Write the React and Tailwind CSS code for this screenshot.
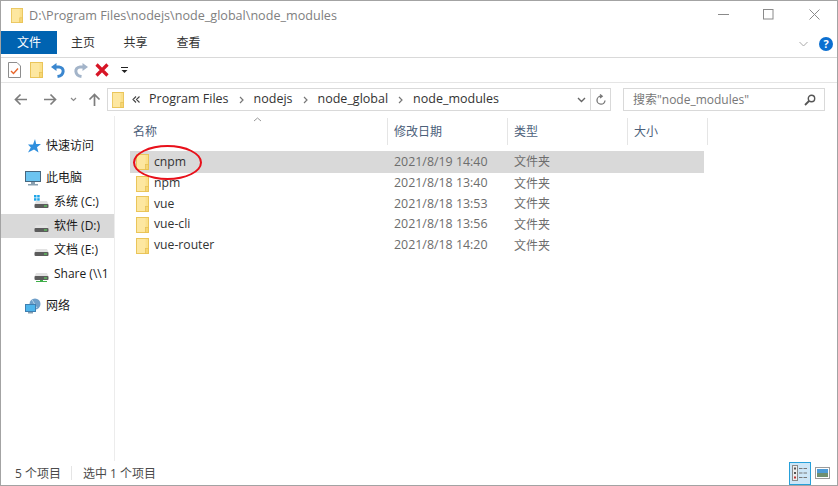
import React from "react";

const font = { fontFamily: '"Open Sans","Noto Sans CJK SC",sans-serif' };

function Folder({ w = 13, h = 16, className = "" }) {
  return (
    <svg width={w} height={h} viewBox="0 0 13 16" preserveAspectRatio="none" className={className}>
      <rect x="0.5" y="0.5" width="12" height="15" fill="#fbe08a" stroke="#eac55a" />
      <rect x="1" y="1" width="8.5" height="14" fill="#fde7a0" />
      <rect x="9.5" y="10.5" width="3" height="5" fill="#f7d774" stroke="#e6bf52" strokeWidth="0.7" />
    </svg>
  );
}

function Drive({ net = false, win = false }) {
  return (
    <svg width="15" height="15" viewBox="0 0 15 15" className="ml-px">
      {win && (
        <g fill="#1ea5e8">
          <rect x="0" y="0" width="2.5" height="2.5" />
          <rect x="3.2" y="0" width="2.5" height="2.5" />
          <rect x="0" y="3.2" width="2.5" height="2.5" />
          <rect x="3.2" y="3.2" width="2.5" height="2.5" />
        </g>
      )}
      <path d="M2 6 L13 6 L14.5 9.5 L0.5 9.5 Z" fill="#e2e2e2" />
      <rect x="0.5" y="9" width="14" height="4" rx="1" fill="#5c5c5c" />
      <rect x="10" y="10.4" width="3" height="1.2" fill="#5fd35f" />
      {net && <path d="M6 13 H9 V14 H13 V15 H2 V14 H6 Z" fill="#3fae49" />}
    </svg>
  );
}

function SideItem({ icon, label, selected, indent }) {
  return (
    <div className={`h-6 flex items-center pr-[3px] ${selected ? "bg-[#d9d9d9]" : ""} ${indent ? "pl-[32px]" : "pl-[24px]"}`}>
      <span className="w-[21px] shrink-0 flex items-center">{icon}</span>
      <span className="whitespace-nowrap overflow-hidden text-[12px] text-[#1a1a1a]">{label}</span>
    </div>
  );
}

function Row({ name, date, height }) {
  return (
    <div className={`${height} flex items-center text-[12px]`}>
      <span className="w-[6px]" />
      <Folder />
      <span className="ml-[5px] w-[240px] text-[#333] text-[12.2px]">{name}</span>
      <span className="w-[120px] text-[#6d6d6d] text-[12.4px] whitespace-nowrap">{date}</span>
      <span className="text-[#6d6d6d]">文件夹</span>
    </div>
  );
}

function HeaderCell({ label, w, pl = "pl-[6px]" }) {
  return (
    <div className={`${w} h-[27px] flex items-center ${pl} border-r border-[#e5e5e5] text-[12px] text-[#4c607a]`}>
      {label}
    </div>
  );
}

function Sep() {
  return (
    <svg width="5" height="8" viewBox="0 0 5 8" className="mx-[10px]">
      <path d="M1 1L4 4L1 7" stroke="#777" strokeWidth="1.2" fill="none" />
    </svg>
  );
}

export default function App() {
  return (
    <div style={font} className="relative w-[838px] h-[486px] bg-white border border-[#a3a3a3] flex flex-col overflow-hidden">
      {/* title bar */}
      <div className="h-[30px] flex items-center shrink-0">
        <Folder className="ml-[10px] -mt-[2px]" w={12} h={15} />
        <span className="ml-[6px] text-[12.6px] text-[#808080]">D:\Program Files\nodejs\node_global\node_modules</span>
        <div className="ml-auto flex items-center -mt-[3px]">
          <svg width="11" height="11" viewBox="0 0 11 11" className="mr-[34px]"><path d="M0 5.5H11" stroke="#8a8a8a" /></svg>
          <svg width="11" height="11" viewBox="0 0 11 11" className="mr-[35px]"><rect x="0.5" y="0.5" width="9.5" height="9.5" fill="none" stroke="#8a8a8a" /></svg>
          <svg width="11" height="11" viewBox="0 0 11 11" className="mr-[17px]"><path d="M0.5 0.5L10.5 10.5M10.5 0.5L0.5 10.5" stroke="#8a8a8a" /></svg>
        </div>
      </div>
      {/* ribbon tabs */}
      <div className="h-[27px] flex items-start shrink-0 border-b border-[#d9d9d9] text-[12px] text-[#333]">
        <div className="w-[56px] h-[23px] bg-[#0063b1] text-white flex items-center justify-center">文件</div>
        <div className="w-[52px] h-[23px] flex items-center justify-center">主页</div>
        <div className="w-[53px] h-[23px] flex items-center justify-center">共享</div>
        <div className="w-[53px] h-[23px] flex items-center justify-center">查看</div>
        <div className="ml-auto h-[25px] flex items-center gap-[11px] pr-[4px]">
          <svg width="9" height="6" viewBox="0 0 9 6"><path d="M0.5 1L4.5 5L8.5 1" stroke="#a8a8a8" fill="none" /></svg>
          <span className="w-[14px] h-[14px] rounded-full bg-[#0b6fd0] text-white text-[11px] font-bold flex items-center justify-center leading-none">?</span>
        </div>
      </div>
      {/* quick access */}
      <div className="h-[25px] flex items-center shrink-0 border-b border-[#e5e5e5] pl-[7px]">
        <svg width="13" height="16" viewBox="0 0 13 16">
          <path d="M.5 .5H9L12.5 4V15.5H.5Z" fill="#fff" stroke="#8d8d8d" />
          <path d="M3 9L5.5 11.5L10 6.5" stroke="#e8662b" strokeWidth="1.4" fill="none" />
        </svg>
        <Folder className="ml-[9px]" />
        <svg width="14" height="15" viewBox="0 0 14 15" className="ml-[8px]">
          <path d="M5.5 0V8L0 4Z" fill="#3b87cf" />
          <path d="M4 4H8C14 4.5 13.5 12.5 6.5 13.5" fill="none" stroke="#3b87cf" strokeWidth="3" />
        </svg>
        <svg width="14" height="15" viewBox="0 0 14 15" className="ml-[9px]">
          <path d="M8.5 0V8L14 4Z" fill="#a3b4c9" />
          <path d="M10 4H6C0 4.5 .5 12.5 7.5 13.5" fill="none" stroke="#a3b4c9" strokeWidth="3" />
        </svg>
        <svg width="14" height="14" viewBox="0 0 14 14" className="ml-[7px]">
          <path d="M1.5 1.5L12.5 12.5M12.5 1.5L1.5 12.5" stroke="#d71526" strokeWidth="3.2" />
        </svg>
        <svg width="7" height="7" viewBox="0 0 7 7" className="ml-[12px]">
          <path d="M0 .5H7" stroke="#222" /><path d="M.5 3H6.5L3.5 6Z" fill="#222" />
        </svg>
      </div>
      {/* nav bar */}
      <div className="h-[33px] flex items-center shrink-0">
        <svg width="13" height="13" viewBox="0 0 13 13" className="ml-[13px]"><path d="M13 6.5H1.5M6.5 1.5L1.5 6.5L6.5 11.5" stroke="#7d7d7d" strokeWidth="1.7" fill="none" /></svg>
        <svg width="13" height="13" viewBox="0 0 13 13" className="ml-[17px]"><path d="M0 6.5H11.5M6.5 1.5L11.5 6.5L6.5 11.5" stroke="#7d7d7d" strokeWidth="1.7" fill="none" /></svg>
        <svg width="7" height="5" viewBox="0 0 7 5" className="ml-[13px]"><path d="M1 1L3.5 3.5L6 1" stroke="#8a8a8a" strokeWidth="1.2" fill="none" /></svg>
        <svg width="13" height="13" viewBox="0 0 13 13" className="ml-[11px]"><path d="M6.5 13V1.5M1.5 6.5L6.5 1.5L11.5 6.5" stroke="#7d7d7d" strokeWidth="1.7" fill="none" /></svg>
        <div className="ml-[6px] w-[504px] h-[23px] border border-[#d9d9d9] flex items-center text-[12.5px] text-[#333]">
          <Folder className="ml-[4px]" w={12} h={16} />
          <svg width="8" height="7" viewBox="0 0 8 7" className="ml-[8px]"><path d="M4 .5L1 3.5L4 6.5M7.5 .5L4.5 3.5L7.5 6.5" stroke="#444" strokeWidth="1.1" fill="none" /></svg>
          <span className="ml-[9px]">Program Files</span>
          <Sep />
          <span>nodejs</span>
          <Sep />
          <span>node_global</span>
          <Sep />
          <span>node_modules</span>
          <div className="ml-auto flex items-center h-full">
            <svg width="9" height="6" viewBox="0 0 9 6" className="mr-[4px]"><path d="M1 1L4.5 4.5L8 1" stroke="#666" strokeWidth="1.4" fill="none" /></svg>
            <div className="w-[20px] h-full border-l border-[#d9d9d9] flex items-center justify-center">
              <svg width="12" height="12" viewBox="0 0 12 12"><path d="M10 6.5A4 4 0 1 1 6 2.2M5 .5L7.2 2.2L5 4" stroke="#777" strokeWidth="1.3" fill="none" /></svg>
            </div>
          </div>
        </div>
        <div className="ml-[12px] w-[202px] h-[23px] border border-[#d9d9d9] flex items-center pl-[9px] pr-[8px] text-[12px] text-[#777]">
          <span>搜索"node_modules"</span>
          <svg width="12" height="12" viewBox="0 0 12 12" className="ml-auto"><circle cx="7.5" cy="4.5" r="3.2" stroke="#555" strokeWidth="1.4" fill="none" /><path d="M5 7L1 11" stroke="#555" strokeWidth="1.8" /></svg>
        </div>
      </div>
      {/* main */}
      <div className="flex-1 flex min-h-0">
        <div className="w-[114px] shrink-0 border-r border-[#ececec] pt-[18px]">
          <SideItem
            icon={<svg width="14" height="14" viewBox="0 0 14 14" className="ml-[2px]"><path d="M8 0L9.2 5H14L10 8.2L11.5 13.5L7 10.5L1 13.5L3.8 8.5L1 5.5H6Z" fill="#2f8fde" /></svg>}
            label="快速访问"
          />
          <div className="h-[8px]" />
          <SideItem
            icon={<svg width="16" height="15" viewBox="0 0 16 15"><rect x="0.5" y="0.5" width="15" height="10" fill="#6cc4f0" stroke="#47677f" /><rect x="6" y="11" width="4" height="2" fill="#8aa0b0" /><rect x="3" y="13" width="10" height="1.5" fill="#8aa0b0" /></svg>}
            label="此电脑"
          />
          <SideItem indent icon={<Drive win />} label="系统 (C:)" />
          <SideItem indent selected icon={<Drive />} label="软件 (D:)" />
          <SideItem indent icon={<Drive />} label="文档 (E:)" />
          <SideItem indent icon={<Drive net />} label="Share (\\1" />
          <div className="h-[8px]" />
          <SideItem
            icon={<svg width="16" height="16" viewBox="0 0 16 16"><circle cx="10" cy="6" r="5.5" fill="#6f9fc9" /><path d="M7 2C9 4 10 8 12 10" stroke="#b7d7ea" fill="none" /><rect x="0.5" y="6.5" width="10" height="7" fill="#4eb5ec" stroke="#3f7fb0" /><rect x="3" y="14" width="5" height="1.5" fill="#8aa0b0" /></svg>}
            label="网络"
          />
        </div>
        <div className="flex-1 min-w-0 relative">
          <div className="flex pt-[2px] pl-[13px] relative">
            <HeaderCell label="名称" w="w-[260px]" pl="pl-[5px]" />
            <HeaderCell label="修改日期" w="w-[120px]" />
            <HeaderCell label="类型" w="w-[120px]" />
            <HeaderCell label="大小" w="w-[80px]" />
            <svg width="9" height="5" viewBox="0 0 9 5" className="absolute left-[138px] top-px"><path d="M1 4L4.5 1L8 4" stroke="#999" fill="none" /></svg>
          </div>
          <div className="mt-[6px] ml-[15px] w-[574px]">
            <div className="bg-[#d9d9d9]"><Row name="cnpm" date="2021/8/19 14:40" height="h-[22px]" /></div>
            <Row name="npm" date="2021/8/18 13:40" height="h-[21px]" />
            <Row name="vue" date="2021/8/18 13:53" height="h-[20px]" />
            <Row name="vue-cli" date="2021/8/18 13:56" height="h-[21px]" />
            <Row name="vue-router" date="2021/8/18 14:20" height="h-[21px]" />
          </div>
          <div className="absolute left-[18px] top-[29px] w-[69px] h-[35px] rounded-[50%] border-2 border-[#e8101a]" />
        </div>
      </div>
      {/* status */}
      <div className="h-[24px] shrink-0 flex items-center text-[12px] text-[#4a4a4a]">
        <span className="ml-[14px] pt-px">5 个项目</span>
        <span className="ml-[10px] h-[14px] border-l border-[#e5e5e5]" />
        <span className="ml-[11px] pt-px">选中 1 个项目</span>
        <div className="ml-auto flex items-center pr-[7px] gap-[4px]">
          <div className="w-[22px] h-[23px] bg-[#cde6f7] border border-[#26a0da] flex items-center justify-center">
            <svg width="16" height="16" viewBox="0 0 16 16">
              <rect x="0.5" y="0.5" width="5" height="15" fill="#eee" stroke="#8a8a8a" />
              <rect x="2" y="2.5" width="2" height="2" fill="#555" />
              <rect x="2" y="7" width="2" height="2" fill="#555" />
              <rect x="2" y="11.5" width="2" height="2" fill="#b33" />
              <path d="M7 3.5H15M7 8H15M7 12.5H15" stroke="#777" strokeDasharray="3.5 1" />
            </svg>
          </div>
          <svg width="15" height="12" viewBox="0 0 15 12">
            <rect x="0.5" y="0.5" width="14" height="11" fill="#fff" stroke="#9b9b9b" />
            <rect x="2" y="2" width="11" height="4" fill="#4d9bd6" />
            <rect x="2" y="6" width="11" height="4" fill="#6f8f70" />
          </svg>
        </div>
      </div>
    </div>
  );
}
